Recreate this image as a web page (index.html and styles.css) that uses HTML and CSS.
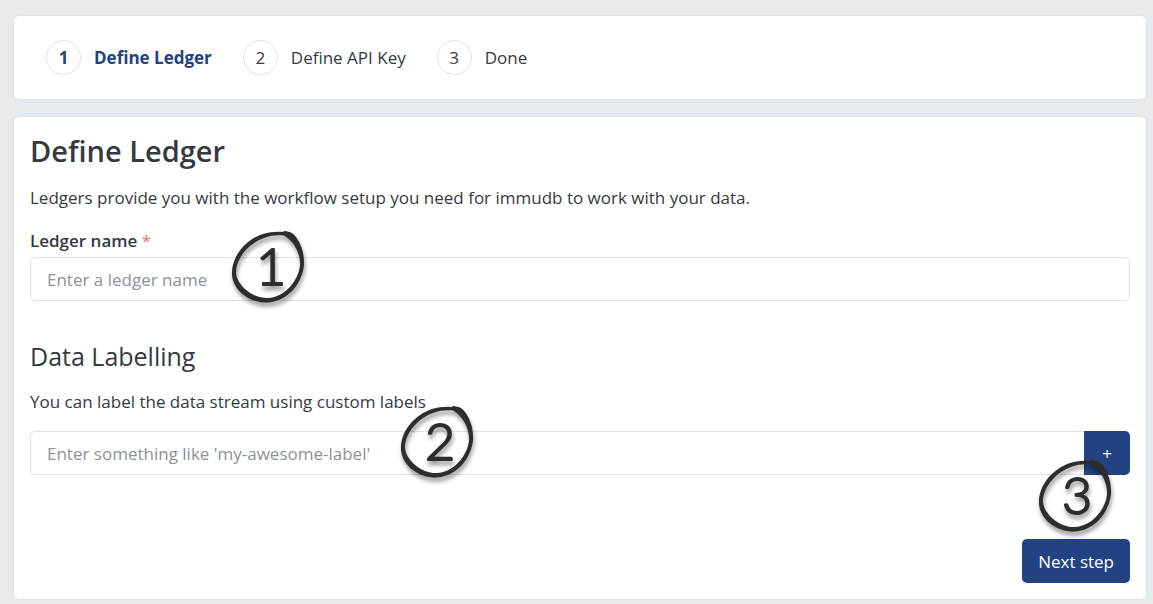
FILE: index.html
```html
<!DOCTYPE html>
<html lang="en">
<head>
<meta charset="utf-8">
<meta name="viewport" content="width=device-width, initial-scale=1">
<title>Define Ledger</title>
<link rel="stylesheet" href="styles.css">
</head>
<body>
<svg class="defs" width="0" height="0" aria-hidden="true">
  <symbol id="ring" viewBox="0 0 80 80">
    <path fill-rule="evenodd" d="M58 4C59 2.500 61 3 62 3.500C66 3.500 69 6 71 9C77 17 79.500 27 79 37C77 56 63 72.500 44 74.500C27 76 8.500 64 7 47C6 29 20 12 38 6C45 4 51 3.500 58 4ZM59 7.500C52 7 46 7.500 39 10C25 15 11 29 11 45C12 58 29 71 43 70C60 69 73 53 75 38C76 26 69 13 59 7.500Z"/>
  </symbol>
</svg>
<main class="page">
  <nav class="card steps" aria-label="Progress">
    <a class="step active" href="#ledger" aria-current="step"><span class="num">1</span><span>Define Ledger</span></a>
    <a class="step" href="#key"><span class="num">2</span><span>Define API Key</span></a>
    <a class="step" href="#done"><span class="num">3</span><span>Done</span></a>
  </nav>
  <form class="card form" id="ledger">
    <h1>Define Ledger</h1>
    <p class="intro">Ledgers provide you with the workflow setup you need for immudb to work with your data.</p>
    <label for="name">Ledger name <span class="required">*</span></label>
    <div class="field">
      <input id="name" type="text" placeholder="Enter a ledger name" required>
      <svg class="mark mark-name" viewBox="0 0 80 80"><use href="#ring"/><text x="46" y="57">1</text></svg>
    </div>
    <h2>Data Labelling</h2>
    <label class="hint" for="tag">You can label the data stream using custom labels</label>
    <div class="field">
      <input id="tag" class="joined" type="text" placeholder="Enter something like 'my-awesome-label'">
      <button class="add" type="button" aria-label="Add label">+</button>
      <svg class="mark mark-tag" viewBox="0 0 80 80"><use href="#ring"/><text x="46" y="57">2</text></svg>
      <svg class="mark mark-next" viewBox="0 0 80 80"><use href="#ring"/><text x="45" y="57">3</text></svg>
    </div>
    <button class="next" type="submit">Next step</button>
  </form>
</main>
</body>
</html>
```
FILE: styles.css
```css
* { box-sizing: border-box; }
body {
  margin: 0;
  background: #e8ebee;
  color: #343a40;
  font: 400 17px/27px "Segoe UI", "Open Sans", "Noto Sans", sans-serif;
}
h1, h2, p { margin: 0; }
.defs { position: absolute; }
.page {
  display: flex;
  flex-direction: column;
  gap: 18px;
  padding: 16px 7px 5px 14px;
}
.card {
  background: #fff;
  border-radius: 5px;
  box-shadow: 0 0 2px rgba(40, 50, 60, 0.12);
}
.steps {
  display: flex;
  flex-wrap: wrap;
  gap: 31px;
  padding: 24px 32px;
}
.step {
  display: flex;
  align-items: center;
  gap: 13px;
  color: inherit;
  text-decoration: none;
}
.num {
  display: grid;
  place-items: center;
  width: 35px;
  height: 35px;
  border: 1px solid #dfe1e8;
  border-radius: 50%;
}
.active { color: #234281; font-weight: 700; }
.form {
  display: flex;
  flex-direction: column;
  padding: 16px;
}
h1 { font-size: 29px; line-height: 36px; font-weight: 600; }
h2 { margin-top: 39px; font-size: 25px; line-height: 32px; font-weight: 400; }
.intro { margin: 15px 0 16px; }
label { margin-bottom: 3px; font-weight: 600; }
.hint { margin: 16px 0; font-weight: 400; }
.required { color: #f86c6b; font-weight: 400; }
.field { position: relative; display: flex; }
input {
  flex: 1;
  min-width: 0;
  height: 44px;
  padding: 0 16px;
  border: 1px solid #dfe1e8;
  border-radius: 5px;
  background: #fff;
  color: inherit;
  font: inherit;
}
input::placeholder { color: #8c9297; opacity: 1; }
.joined { border-right: 0; border-radius: 5px 0 0 5px; }
button {
  border: 0;
  background: #234281;
  color: #fff;
  font: inherit;
  cursor: pointer;
}
.add { width: 46px; border-radius: 0 5px 5px 0; }
.next {
  align-self: flex-end;
  height: 44px;
  margin-top: 64px;
  padding: 0 16px;
  border-radius: 5px;
}
.mark {
  position: absolute;
  width: 80px;
  height: 80px;
  overflow: visible;
  fill: #2d2d2d;
  filter: drop-shadow(1px 4px 2px rgba(0, 0, 0, 0.4));
  pointer-events: none;
}
.mark text {
  font: 300 52px Lato, sans-serif;
  text-anchor: middle;
  stroke: #2d2d2d;
  stroke-width: 2;
  stroke-linejoin: round;
}
.mark-name { top: -29px; left: 195px; }
.mark-tag { top: -28px; left: 364px; }
.mark-next { top: 26px; right: 18px; }
```
